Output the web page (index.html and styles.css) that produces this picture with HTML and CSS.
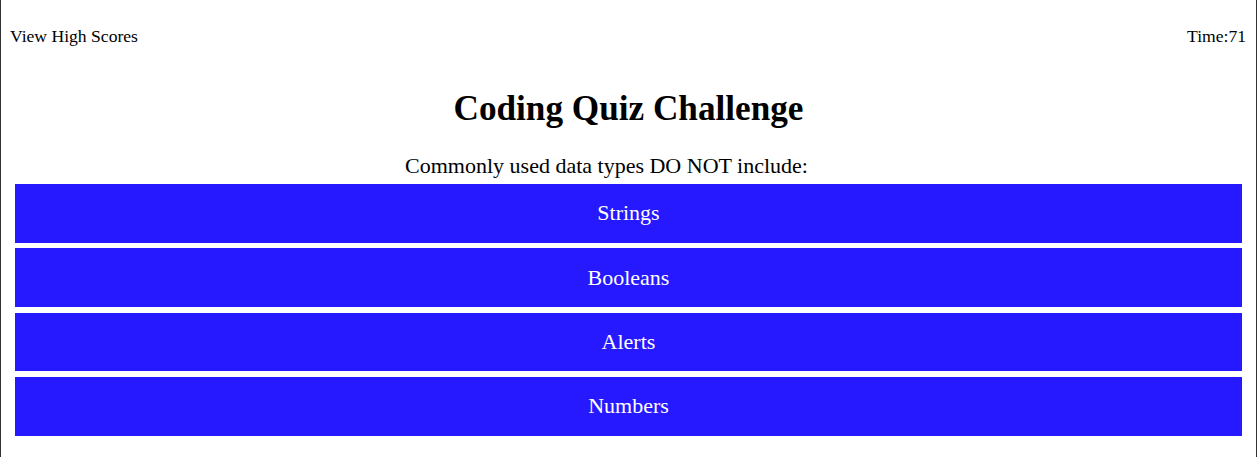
FILE: index.html
```html
<!DOCTYPE html>
<html>
<head>
<meta charset="utf-8">
<link rel="stylesheet" href="styles.css">
</head>
<body>
<div class="page">
  <header class="topbar">
    <a class="scores">View High Scores</a>
    <span class="timer">Time:71</span>
  </header>
  <h1 class="title">Coding Quiz Challenge</h1>
  <p class="question">Commonly used data types DO NOT include:</p>
  <div class="answers">
    <button class="answer">Strings</button>
    <button class="answer">Booleans</button>
    <button class="answer">Alerts</button>
    <button class="answer">Numbers</button>
  </div>
</div>
</body>
</html>
```

FILE: styles.css
```css
html, body {
  margin: 0;
  padding: 0;
  background: #fff;
}
body {
  font-family: "Liberation Serif", "Times New Roman", serif;
  color: #000;
}
.page {
  box-sizing: border-box;
  width: 1257px;
  height: 457px;
  border-left: 1px solid #333;
  border-right: 1px solid #333;
  overflow: hidden;
}
.topbar {
  display: flex;
  justify-content: space-between;
  padding: 27px 10px 0 9px;
  font-size: 17.6px;
  line-height: 18px;
}
.scores {
  color: #000;
}
.title {
  margin: 45px 0 0;
  text-align: center;
  font-size: 35.2px;
  line-height: 37px;
  font-weight: bold;
}
.question {
  margin: 27px 0 0;
  padding-right: 44px;
  text-align: center;
  font-size: 22px;
  line-height: 23px;
}
.answers {
  display: flex;
  flex-direction: column;
  gap: 5.6px;
  margin: 7px 14px 0 14px;
}
.answer {
  height: 58.7px;
  border: none;
  background: #2618ff;
  color: #fff;
  font-family: "Liberation Serif", "Times New Roman", serif;
  font-size: 22px;
  padding: 0;
}
```
